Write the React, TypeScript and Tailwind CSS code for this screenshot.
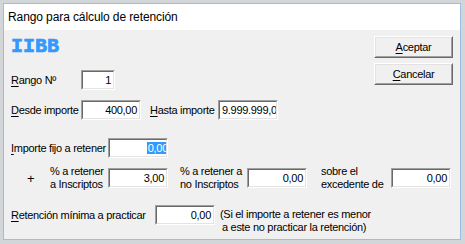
import React from 'react'

// Classic Win32 sunken edit box
function Edit({ className, children, align = 'right' }: { className: string; children: React.ReactNode; align?: 'left' | 'right' }) {
  return (
    <div className={`h-[20px] shrink-0 border border-[#a0a0a0] border-r-white border-b-white ${className}`}>
      <div
        className={`h-full flex items-center overflow-hidden whitespace-nowrap bg-white border border-[#696969] border-r-[#e3e3e3] border-b-[#e3e3e3] ${
          align === 'right' ? 'justify-end pr-[1px]' : 'justify-start pl-[1px]'
        }`}
      >
        {children}
      </div>
    </div>
  )
}

function Button({ children }: { children: React.ReactNode }) {
  return (
    <div className="w-[79px] h-[22px] border border-white border-r-[#696969] border-b-[#696969]">
      <div className="h-full flex items-center justify-center border border-[#e3e3e3] border-r-[#a0a0a0] border-b-[#a0a0a0] bg-[#f0f0f0]">
        {children}
      </div>
    </div>
  )
}

const U = ({ children }: { children: React.ReactNode }) => (
  <span className="underline underline-offset-[2px] decoration-1">{children}</span>
)

export default function App() {
  return (
    <div className="w-[465px] h-[244px] bg-[#d3d6d9] pt-[3px] pl-[3px] font-['Liberation_Sans',Arial,sans-serif] text-black">
      <div className="w-[458px] h-[237px] border border-[#9dbde0] bg-[#f0f0f0] flex flex-col">
        {/* Title bar */}
        <div className="h-[26px] bg-white flex items-center pl-[4px] pb-[1px] text-[12px] tracking-[-0.1px]">
          Rango para cálculo de retención
        </div>

        {/* Client area */}
        <div className="flex-1 flex flex-col text-[11px] leading-[13px] tracking-[-0.3px]">
          <div className="flex items-start justify-between">
            <div className="flex flex-col pl-[7px]">
              <div className="mt-[7px] h-[20px] leading-[20px] text-[20px] font-bold tracking-normal text-[#3399ff] font-['Liberation_Mono',monospace] [-webkit-text-stroke:0.7px_#3399ff]">
                IIBB
              </div>
              <div className="mt-[13px] flex items-center">
                <div className="w-[70px]">
                  <U>R</U>ango Nº
                </div>
                <Edit className="w-[34px]">
                  <span className="pr-[1px]">1</span>
                </Edit>
              </div>
              <div className="mt-[10px] flex items-center">
                <div className="w-[70px]">
                  <U>D</U>esde importe
                </div>
                <Edit className="w-[60px]">
                  <span className="pr-[1px]">400,00</span>
                </Edit>
                <div className="ml-[9px] w-[68px]">
                  <U>H</U>asta importe
                </div>
                <Edit className="w-[60px]" align="left">
                  <span className="pl-[1px]">9.999.999,00</span>
                </Edit>
              </div>
            </div>
            <div className="mt-[6px] mr-[7px] flex flex-col gap-[5px]">
              <Button>
                <span>
                  <U>A</U>ceptar
                </span>
              </Button>
              <Button>
                <span>
                  <U>C</U>ancelar
                </span>
              </Button>
            </div>
          </div>

          {/* Importe fijo */}
          <div className="mt-[18px] pl-[7px] flex items-center">
            <div className="w-[97px]">
              <U>I</U>mporte fijo a retener
            </div>
            <Edit className="w-[60px]">
              <span className="bg-[#3399ff] text-white leading-[12px] mr-[-3px] pl-[1px]">0,00</span>
            </Edit>
          </div>

          {/* Porcentajes */}
          <div className="mt-[7px] pl-[7px] flex items-center">
            <div className="w-[39px] pl-[16px] text-[13px]">+</div>
            <div className="w-[58px]">
              % a retener
              <br />a Inscriptos
            </div>
            <Edit className="w-[60px]">
              <span className="pr-[1px]">3,00</span>
            </Edit>
            <div className="ml-[12px] w-[67px]">
              % a retener a
              <br />
              no Inscriptos
            </div>
            <Edit className="w-[60px]">
              <span className="pr-[1px]">0,00</span>
            </Edit>
            <div className="ml-[14px] w-[70px]">
              sobre el
              <br />
              excedente de
            </div>
            <Edit className="w-[60px]">
              <span className="pr-[1px]">0,00</span>
            </Edit>
          </div>

          {/* Retención mínima */}
          <div className="mt-[14px] pl-[7px] flex items-start">
            <div className="w-[144px] h-[20px] flex items-center">
              <span>
                <U>R</U>etención mínima a practicar
              </span>
            </div>
            <Edit className="w-[60px]">
              <span className="pr-[1px]">0,00</span>
            </Edit>
            <div className="ml-[5px] mt-[3px]">
              (Si el importe a retener es menor
              <br />
              <span className="pl-[2px]">a este no practicar la retención)</span>
            </div>
          </div>
        </div>
      </div>
    </div>
  )
}
